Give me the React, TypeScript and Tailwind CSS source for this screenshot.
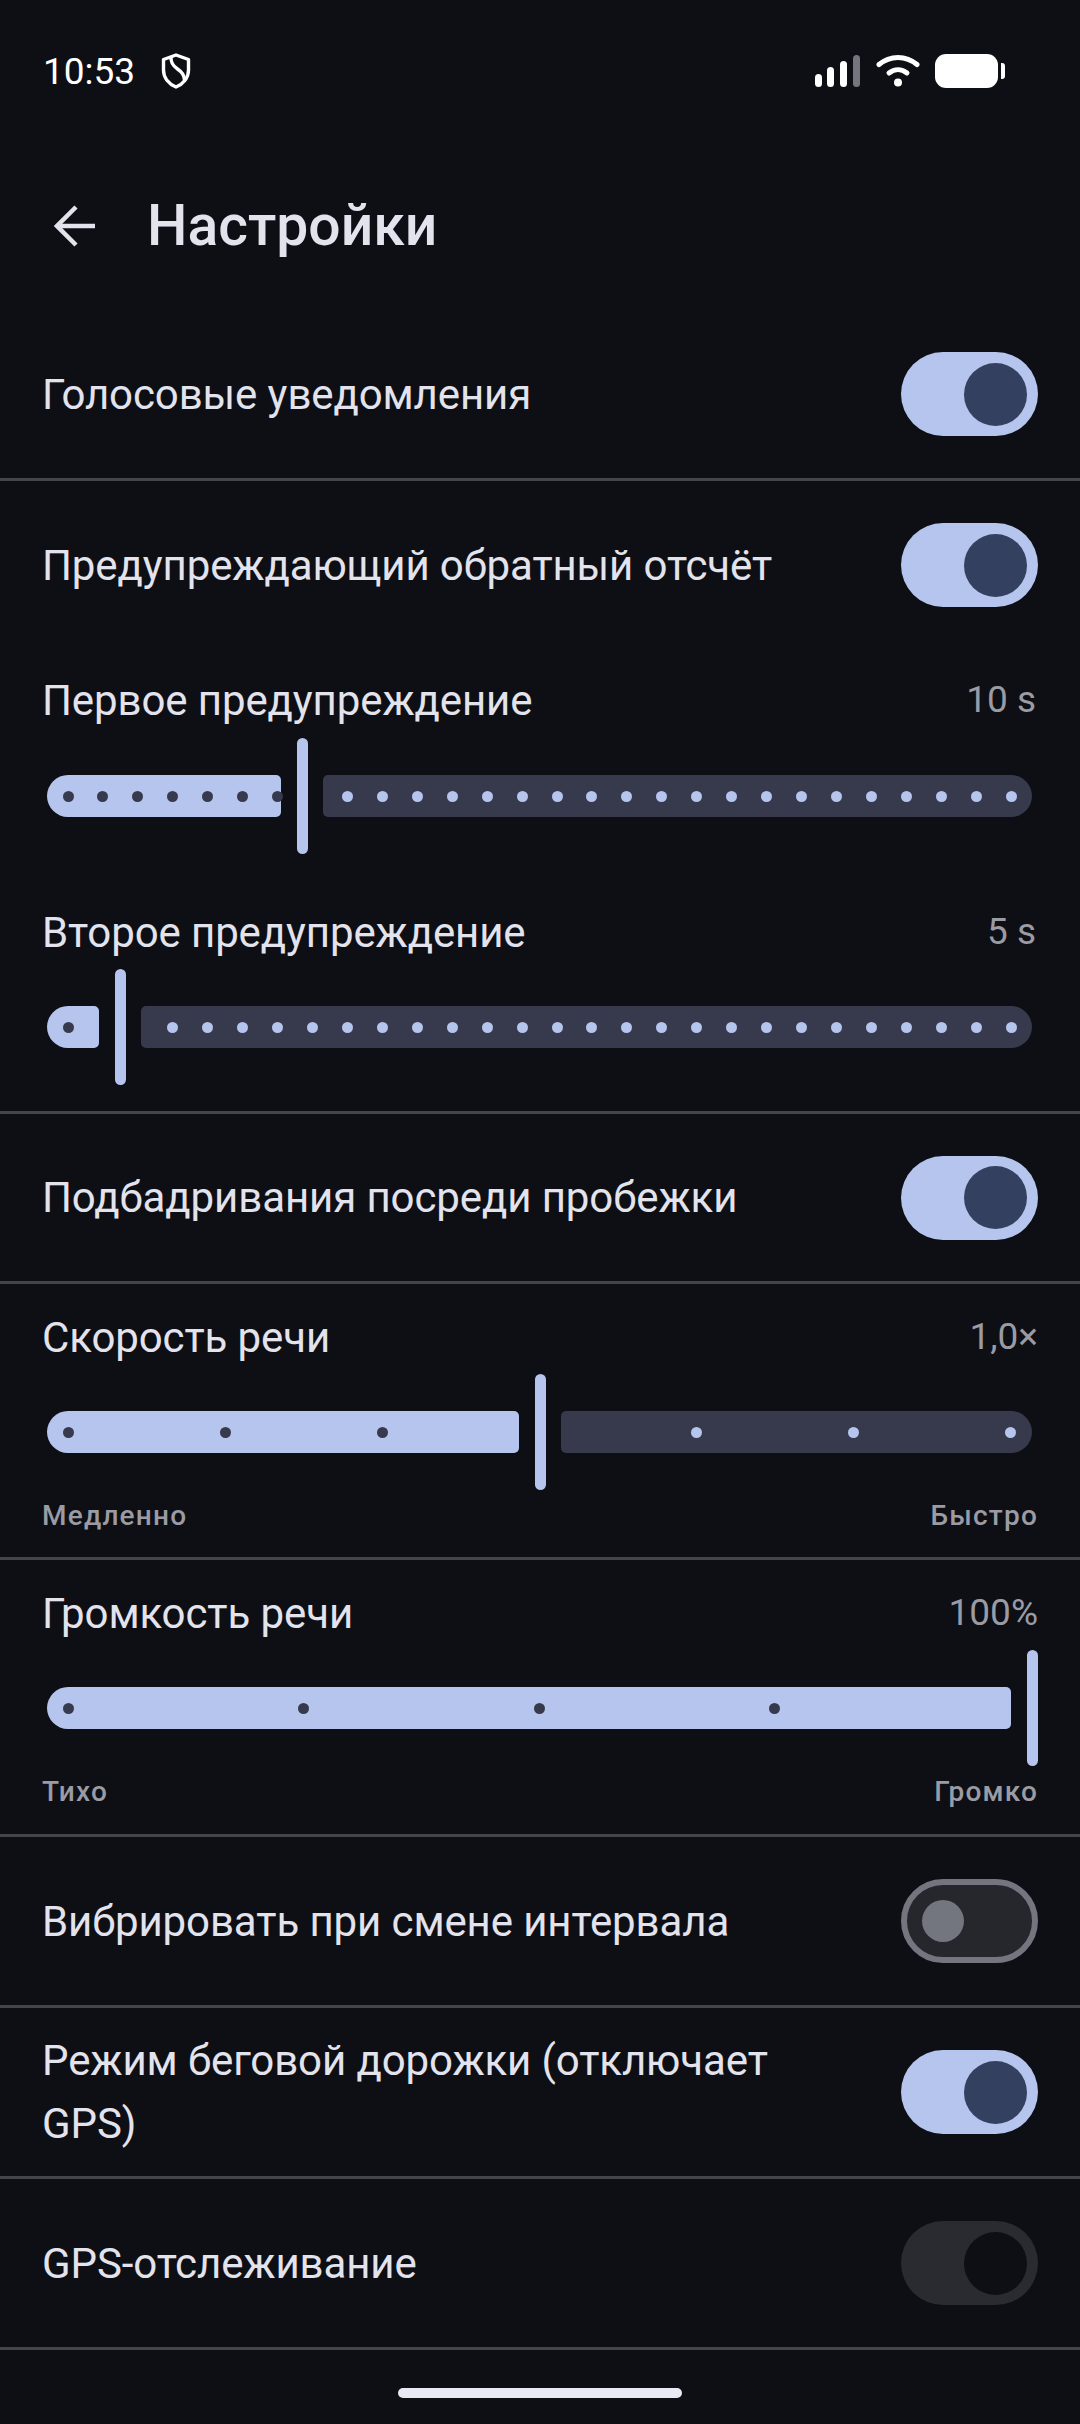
import React from 'react'

const ACCENT = 'bg-[#b6c5ee]'

function Divider() {
  return <div className="h-[3px] bg-[#44444c]" />
}

function Switch({ state = 'on' }: { state?: 'on' | 'off' | 'disabled' }) {
  if (state === 'off') {
    return (
      <div className="flex h-[84px] w-[137px] shrink-0 items-center rounded-full border-[6px] border-[#74767f] bg-[#26272d] pl-[15px]">
        <div className="size-[42px] rounded-full bg-[#74767f]" />
      </div>
    )
  }
  const track = state === 'on' ? ACCENT : 'bg-[#2a2b30]'
  const thumb = state === 'on' ? 'bg-[#33405f]' : 'bg-[#0d0f14]'
  return (
    <div className={`flex h-[84px] w-[137px] shrink-0 items-center justify-end rounded-full pr-[11px] ${track}`}>
      <div className={`size-[63px] rounded-full ${thumb}`} />
    </div>
  )
}

function SwitchRow({ label, state, short }: { label: React.ReactNode; state?: 'on' | 'off' | 'disabled'; short?: boolean }) {
  return (
    <div className={`flex items-center justify-between px-[42px] ${short ? 'h-[167px]' : 'h-[168px]'}`}>
      <div className="w-[800px] text-[42px] leading-[63px] tracking-[-0.1px] text-[#e3e3ed]">{label}</div>
      <Switch state={state} />
    </div>
  )
}

function Label({ text, value }: { text: string; value: string }) {
  return (
    <div className="flex h-[56px] items-center justify-between px-[42px]">
      <span className="text-[42px] tracking-[-0.1px] text-[#e3e3ed]">{text}</span>
      <span className={`text-[37px] text-[#9a9ba4] ${value.endsWith('s') ? 'mr-[2px]' : ''}`}>{value}</span>
    </div>
  )
}

// fill: active part's width from the track's left edge; dots sit at page x = 68 + i * step
function Slider({ fill, step, count, hide }: { fill: number; step: number; count: number; hide: number[] }) {
  const handleX = 47 + fill + 16
  const dots = Array.from({ length: count }, (_, i) => 68 + i * step).filter((_, i) => !hide.includes(i))
  const atEnd = handleX + 11 >= 1038
  return (
    <div className="relative mx-[42px] flex h-[116px] items-center pl-[5px] pr-[6px]">
      <div
        className={`h-[42px] shrink-0 rounded-l-[21px] rounded-r-[5px] ${ACCENT}`}
        style={{ width: fill }}
      />
      <div className={`ml-[16px] h-[116px] w-[11px] shrink-0 rounded-full ${ACCENT} ${atEnd ? '-mr-[6px]' : ''}`} />
      {!atEnd && <div className="ml-[15px] h-[42px] flex-1 rounded-l-[5px] rounded-r-[21px] bg-[#363a4c]" />}
      {dots.map((x) => (
        <div
          key={x}
          className={`absolute top-[53px] size-[11px] rounded-full ${x < handleX ? 'bg-[#363a4c]' : ACCENT}`}
          style={{ left: x - 42 - 5.5 }}
        />
      ))}
    </div>
  )
}

function Ends({ left, right }: { left: string; right: string }) {
  return (
    <div className="flex h-[40px] items-center justify-between px-[42px] text-[28px] font-medium tracking-[1.2px] text-[#9a9ba4]">
      <span>{left}</span>
      <span>{right}</span>
    </div>
  )
}

function StatusBar() {
  return (
    <div className="flex h-[142px] items-center justify-between pl-[43px] pr-[75px] text-white">
      <div className="flex items-center gap-[26px]">
        <span className="text-[37px] leading-none">10:53</span>
        <svg width="30" height="36" viewBox="0 0 30 36" fill="none" stroke="white" strokeWidth="3.4" strokeLinejoin="round">
          <path d="M15 2 L27.5 6.5 V17 C27.5 25 22 31 15 34 C8 31 2.5 25 2.5 17 V6.5 Z" />
          <path d="M10 3.5 C9.5 9 12 13 16.5 16 C21 19 23.5 22 23.5 27" />
        </svg>
      </div>
      <div className="flex items-center">
        <svg width="46" height="34" viewBox="0 0 46 34">
          <rect x="0" y="20" width="7" height="13" rx="3.5" fill="white" />
          <rect x="12" y="13" width="7" height="20" rx="3.5" fill="white" />
          <rect x="25" y="7" width="7" height="26" rx="3.5" fill="white" />
          <rect x="38" y="1" width="7" height="32" rx="3.5" fill="#74767f" />
        </svg>
        <svg className="ml-[15px]" width="44" height="34" viewBox="0 0 44 34" fill="none" stroke="white" strokeWidth="5" strokeLinecap="round">
          <path d="M3 10.5 C14 1 30 1 41 10.5" />
          <path d="M13 19 C18.5 14.5 25.5 14.5 31 19" />
          <circle cx="22" cy="28.5" r="4" fill="white" stroke="none" />
        </svg>
        <div className="ml-[15px] h-[34px] w-[63px] rounded-[11px] bg-white" />
        <div className="ml-[3px] h-[16px] w-[4px] rounded-r-[3px] bg-white" />
      </div>
    </div>
  )
}

export default function App() {
  return (
    <div className="flex h-[2424px] w-[1080px] flex-col overflow-hidden bg-[#0d0f14] font-['Roboto',sans-serif]">
      <StatusBar />

      <div className="flex h-[168px] items-center pl-[54px]">
        <svg width="42" height="42" viewBox="0 0 42 42" fill="none" stroke="#e3e3ed" strokeWidth="4.5">
          <path d="M41 21 H4" />
          <path d="M22 2 L3 21 L22 40" />
        </svg>
        <h1 className="ml-[51px] text-[57px] font-medium text-[#e3e3ed]">Настройки</h1>
      </div>

      <SwitchRow label="Голосовые уведомления" />
      <Divider />

      <SwitchRow label="Предупреждающий обратный отсчёт" />
      <div className="mt-[23px]">
        <Label text="Первое предупреждение" value="10 s" />
      </div>
      <div className="mt-[10px]">
        <Slider fill={234} step={34.93} count={28} hide={[7]} />
      </div>
      <div className="mt-[50px]">
        <Label text="Второе предупреждение" value="5 s" />
      </div>
      <div className="mt-[9px]">
        <Slider fill={52} step={34.93} count={28} hide={[1, 2]} />
      </div>
      <div className="h-[26px]" />
      <Divider />

      <SwitchRow label="Подбадривания посреди пробежки" short />
      <Divider />

      <div className="pt-[25px]">
        <Label text="Скорость речи" value="1,0×" />
        <div className="mt-[9px]">
          <Slider fill={472} step={157} count={7} hide={[3]} />
        </div>
        <div className="mt-[6px] h-[61px]">
          <Ends left="Медленно" right="Быстро" />
        </div>
      </div>
      <Divider />

      <div className="pt-[25px]">
        <Label text="Громкость речи" value="100%" />
        <div className="mt-[9px]">
          <Slider fill={964} step={235.5} count={4} hide={[]} />
        </div>
        <div className="mt-[6px] h-[62px]">
          <Ends left="Тихо" right="Громко" />
        </div>
      </div>
      <Divider />

      <SwitchRow label="Вибрировать при смене интервала" state="off" />
      <Divider />

      <SwitchRow label="Режим беговой дорожки (отключает GPS)" />
      <Divider />

      <SwitchRow label="GPS-отслеживание" state="disabled" />
      <Divider />

      <div className="mt-[38px] flex justify-center">
        <div className="h-[10px] w-[284px] rounded-full bg-[#e9e9f3]" />
      </div>
    </div>
  )
}
